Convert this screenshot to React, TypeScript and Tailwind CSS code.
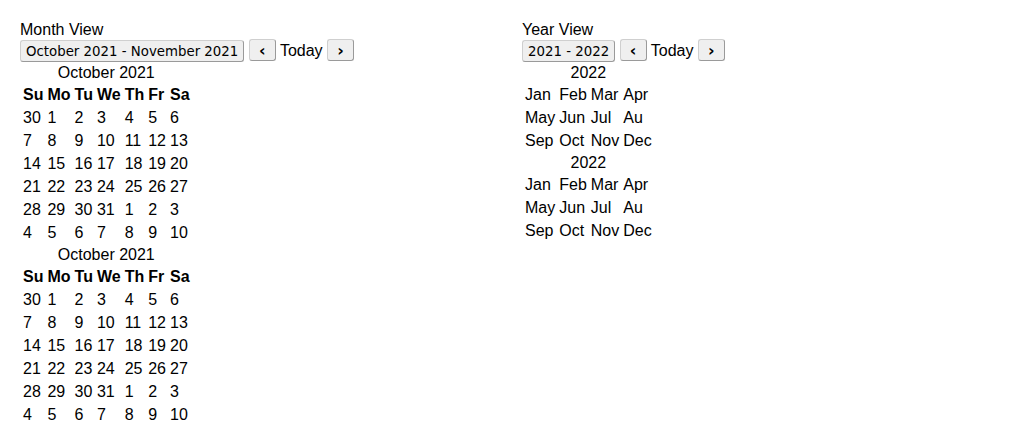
const weekdays = ["Su", "Mo", "Tu", "We", "Th", "Fr", "Sa"];

const monthWeeks = [
  [30, 1, 2, 3, 4, 5, 6],
  [7, 8, 9, 10, 11, 12, 13],
  [14, 15, 16, 17, 18, 19, 20],
  [21, 22, 23, 24, 25, 26, 27],
  [28, 29, 30, 31, 1, 2, 3],
  [4, 5, 6, 7, 8, 9, 10],
];

const monthRows = [
  ["Jan", "Feb", "Mar", "Apr"],
  ["May", "Jun", "Jul", "Au"],
  ["Sep", "Oct", "Nov", "Dec"],
];

function NavButton({ children, wide }: { children: React.ReactNode; wide?: boolean }) {
  return (
    <button
      className={`h-[22px] bg-[#efefef] border border-[#cfcfcf] border-r-[#9a9a9a] border-b-[#9a9a9a] rounded-[3px] text-black align-baseline ${
        wide ? "px-[5px] text-[13.33px] leading-[17px]" : "w-[27px] text-[16px] leading-[19px] font-bold"
      }`}
      style={{ fontFamily: '"DejaVu Sans", sans-serif' }}
    >
      {children}
    </button>
  );
}

function Toolbar({ range }: { range: string }) {
  return (
    <div className="pb-[1px]">
      <NavButton wide>{range}</NavButton> <NavButton>‹</NavButton> Today <NavButton>›</NavButton>
    </div>
  );
}

function MonthTable() {
  return (
    <table className="border-separate border-spacing-[2px]">
      <caption className="text-center">October 2021</caption>
      <thead>
        <tr>
          {weekdays.map((d) => (
            <th key={d} className="p-[1px] text-left font-bold">
              {d}
            </th>
          ))}
        </tr>
      </thead>
      <tbody>
        {monthWeeks.map((week, i) => (
          <tr key={i}>
            {week.map((day, j) => (
              <td key={j} className="p-[1px]">
                {day}
              </td>
            ))}
          </tr>
        ))}
      </tbody>
    </table>
  );
}

function YearTable() {
  return (
    <table className="border-separate border-spacing-[2px]">
      <caption className="text-center">2022</caption>
      <tbody>
        {monthRows.map((row, i) => (
          <tr key={i}>
            {row.map((m) => (
              <td key={m} className="p-[1px]">
                {m}
              </td>
            ))}
          </tr>
        ))}
      </tbody>
    </table>
  );
}

export default function App() {
  return (
    <div
      className="grid grid-cols-2 gap-5 p-5 text-[16px] leading-[19px] text-black bg-white"
      style={{ fontFamily: '"Liberation Sans", Arial, sans-serif' }}
    >
      <div>
        <div>Month View</div>
        <Toolbar range="October 2021 - November 2021" />
        <MonthTable />
        <MonthTable />
      </div>
      <div>
        <div>Year View</div>
        <Toolbar range="2021 - 2022" />
        <YearTable />
        <YearTable />
      </div>
    </div>
  );
}
